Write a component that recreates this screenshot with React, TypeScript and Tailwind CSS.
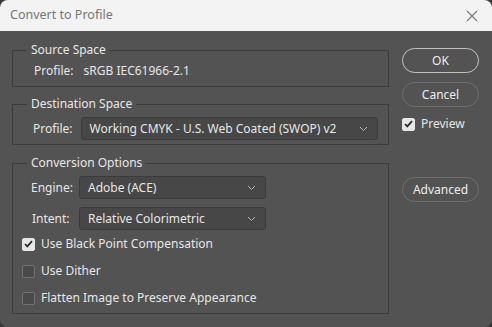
import React from "react";

const font = { fontFamily: '"Noto Sans", "Open Sans", sans-serif' };

const Chevron: React.FC = () => (
  <svg width="9" height="6" viewBox="0 0 9 6" className="shrink-0">
    <path d="M1 1l3.5 3.5L8 1" fill="none" stroke="#b5b5b5" strokeWidth="1" />
  </svg>
);

const Select: React.FC<{ value: string; width: string }> = ({ value, width }) => (
  <div
    className={`${width} h-[23px] flex items-center justify-between pl-[8px] pr-[9px] bg-[#474747] border border-[#3b3b3b] rounded-[3px] text-[#e6e6e6]`}
  >
    <span>{value}</span>
    <Chevron />
  </div>
);

const Checkbox: React.FC<{ checked?: boolean; label: string }> = ({ checked, label }) => (
  <label className="flex items-center gap-[6px]">
    <span
      className={`w-[13px] h-[13px] rounded-[2px] flex items-center justify-center border ${
        checked ? "bg-[#e6e6e6] border-[#e6e6e6]" : "bg-[#4a4a4a] border-[#727272]"
      }`}
    >
      {checked && (
        <svg width="9" height="8" viewBox="0 0 9 8">
          <path d="M1 4l2.3 2.4L8 1.2" fill="none" stroke="#2a2a2a" strokeWidth="1.8" />
        </svg>
      )}
    </span>
    <span className="text-[#e6e6e6]">{label}</span>
  </label>
);

const Button: React.FC<{ label: string; primary?: boolean }> = ({ label, primary }) => (
  <button
    className={`w-[77px] h-[25px] rounded-full border text-[#ececec] ${
      primary ? "border-[#c4c4c4]" : "border-[#6e6e6e]"
    }`}
  >
    {label}
  </button>
);

const Group: React.FC<{ title: string; className?: string; children: React.ReactNode }> = ({
  title,
  className,
  children,
}) => (
  <fieldset className={`border border-[#3c3c3c] ${className ?? ""}`}>
    <legend className="ml-[14px] px-[4px] text-[#e8e8e8] leading-[16px]">{title}</legend>
    {children}
  </fieldset>
);

export default function App() {
  return (
    <div className="w-[492px] h-[327px] bg-[#3a3a3a]" style={font}>
      <div className="w-[492px] h-[327px] rounded-[8px] overflow-hidden bg-[#535353] flex flex-col text-[12px]">
        <div className="h-[31px] shrink-0 bg-[#f3f3f3] flex items-center justify-between pl-[10px] pr-[14px]">
          <span className="text-[#767676] text-[12.5px]">Convert to Profile</span>
          <svg width="12" height="12" viewBox="0 0 12 12">
            <path d="M1 1l10 10M11 1L1 11" stroke="#7a7a7a" strokeWidth="1.1" />
          </svg>
        </div>
        <div className="flex pl-[12px] pt-[11px]">
          <div className="w-[377px] flex flex-col">
            <Group title="Source Space" className="h-[45px]">
              <div className="flex items-center gap-[10px] text-[#e6e6e6] mt-[4px] pl-[21px]">
                <span>Profile:</span>
                <span>sRGB IEC61966-2.1</span>
              </div>
            </Group>
            <Group title="Destination Space" className="h-[49px] mt-[9px]">
              <div className="flex items-center gap-[8px] text-[#e6e6e6] mt-[5px] pl-[20px]">
                <span>Profile:</span>
                <Select value="Working CMYK - U.S. Web Coated (SWOP) v2" width="w-[297px]" />
              </div>
            </Group>
            <Group title="Conversion Options" className="h-[159px] mt-[10px]">
              <div className="flex flex-col mt-[5px] pl-[9px]">
                <div className="flex items-center text-[#e6e6e6]">
                  <span className="w-[57px] pl-[9px]">Engine:</span>
                  <Select value="Adobe (ACE)" width="w-[187px]" />
                </div>
                <div className="flex items-center text-[#e6e6e6] mt-[8px]">
                  <span className="w-[57px] pl-[10px]">Intent:</span>
                  <Select value="Relative Colorimetric" width="w-[187px]" />
                </div>
                <div className="flex flex-col gap-[9px] mt-[5px]">
                  <Checkbox checked label="Use Black Point Compensation" />
                  <Checkbox label="Use Dither" />
                  <Checkbox label="Flatten Image to Preserve Appearance" />
                </div>
              </div>
            </Group>
          </div>
          <div className="ml-[13px] pt-[6px] flex flex-col">
            <Button label="OK" primary />
            <div className="mt-[9px]">
              <Button label="Cancel" />
            </div>
            <div className="mt-[8px]">
              <Checkbox checked label="Preview" />
            </div>
            <div className="mt-[44px]">
              <Button label="Advanced" />
            </div>
          </div>
        </div>
      </div>
    </div>
  );
}
